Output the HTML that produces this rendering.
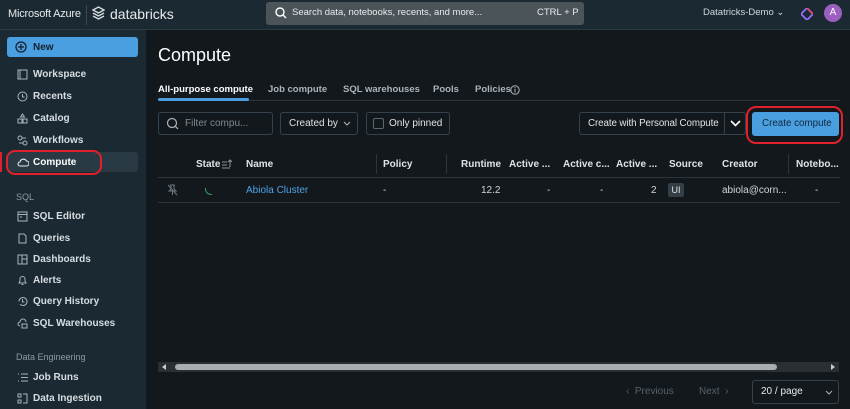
<!DOCTYPE html>
<html><head><meta charset="utf-8"><style>
*{margin:0;padding:0;box-sizing:border-box}
body{width:850px;height:409px;overflow:hidden;background:#13181d;font-family:"Liberation Sans",sans-serif;color:#dfe3e6;position:relative;font-size:10px}
.a{position:absolute;white-space:nowrap;line-height:12px}
.hdr{left:0;top:0;width:850px;height:30px;background:#1b2a32;border-bottom:1px solid #2c3a42}
.side{left:0;top:30px;width:146px;height:379px;background:#1b2a32}
.si{left:17px;font-size:10px;color:#d6dde2;font-weight:bold}
.si svg{position:absolute;left:0;top:0}
.si span{position:absolute;left:16px;top:0}
.lbl{color:#8d9aa3;font-size:9px}
.box{border:1px solid #36424b;border-radius:3px;background:#13181d}
.th{top:159px;font-size:10px;font-weight:bold;color:#dfe3e6}
.td{top:185px;font-size:10px;color:#cfd5d9}
.tab{top:84px;font-size:9.5px;color:#aab4bb;font-weight:bold}
</style></head><body>
<div class="a hdr"></div>
<div class="a" style="left:8px;top:8px;font-size:11px;color:#e6eaed;letter-spacing:-0.2px">Microsoft Azure</div>
<div class="a" style="left:86px;top:5px;width:1px;height:20px;background:#3a4850"></div>
<svg class="a" style="left:92px;top:6px" width="13" height="14" viewBox="0 0 13 14"><path d="M1 4l5.5-3 5.5 3-5.5 3zM1 7l5.5 3 5.5-3M1 10l5.5 3 5.5-3" fill="none" stroke="#d9dee2" stroke-width="1.3"/></svg>
<div class="a" style="left:110px;top:6px;font-size:14px;line-height:16px;color:#e6eaed">databricks</div>
<div class="a" style="left:266px;top:2px;width:318px;height:23px;background:#4b5459;border-radius:3px"></div>
<svg class="a" style="left:275px;top:7px" width="12" height="12"><circle cx="5" cy="5" r="4" fill="none" stroke="#fff" stroke-width="1.4"/><path d="M8 8l3 3" stroke="#fff" stroke-width="1.4"/></svg>
<div class="a" style="left:292px;top:7px;font-size:9.5px;color:#e8ecee">Search data, notebooks, recents, and more...</div>
<div class="a" style="left:537px;top:7px;font-size:9.5px;color:#e8ecee">CTRL + P</div>
<div class="a" style="left:703px;top:7px;font-size:9.5px;color:#d0d7dc">Datatricks-Demo ⌄</div>
<svg class="a" style="left:801px;top:8px" width="12" height="12"><path d="M6 0L12 6 6 12 0 6z" fill="none" stroke="#9a6bff" stroke-width="1.8"/><path d="M6 0L12 6" stroke="#e04a6a" stroke-width="1.8"/></svg>
<div class="a" style="left:824px;top:4px;width:18px;height:18px;border-radius:50%;background:#9b5fc0;color:#fff;font-size:10px;text-align:center;line-height:18px">A</div>

<div class="a side"></div>
<div class="a" style="left:7px;top:37px;width:131px;height:20px;background:#4a9fe0;border-radius:3px"></div>
<svg class="a" style="left:15px;top:41px" width="12" height="12"><circle cx="6" cy="6" r="5" fill="none" stroke="#13202a" stroke-width="1.3"/><path d="M6 3v6M3 6h6" stroke="#13202a" stroke-width="1.3"/></svg>
<div class="a" style="left:33px;top:42px;font-size:10px;color:#13202a;font-weight:bold">New</div>
<div class="a" style="left:7px;top:152px;width:131px;height:20px;background:#2a3a44;border-radius:3px"></div>
<div class="a" style="left:6px;top:150px;width:96px;height:25px;border:2px solid #e0202a;border-radius:9px"></div>
<div class="a" style="left:0;top:152px;width:2px;height:20px;background:#e0202a"></div>

<div class="a si" style="top:69px"><svg width="11" height="11"><rect x="1" y="1" width="9" height="9" fill="none" stroke="#aab4bb"/><path d="M3 1v9" stroke="#aab4bb"/></svg><span>Workspace</span></div>
<div class="a si" style="top:91px"><svg width="11" height="11"><circle cx="5.5" cy="5.5" r="4.5" fill="none" stroke="#aab4bb"/><path d="M5.5 3v3h2" fill="none" stroke="#aab4bb"/></svg><span>Recents</span></div>
<div class="a si" style="top:113px"><svg width="11" height="11"><path d="M5.5 1l2 3h-4zM1 6h4v4H1zM6 6h4v4H6z" fill="none" stroke="#aab4bb"/></svg><span>Catalog</span></div>
<div class="a si" style="top:135px"><svg width="11" height="11"><circle cx="3" cy="3" r="2" fill="none" stroke="#aab4bb"/><circle cx="8" cy="8" r="2" fill="none" stroke="#aab4bb"/><path d="M5 3h4M2 8h4" stroke="#aab4bb"/></svg><span>Workflows</span></div>
<div class="a si" style="top:157px"><svg width="12" height="11"><path d="M3 9h6.5a2.5 2.5 0 0 0 0-5A3.5 3.5 0 0 0 3 5a2 2 0 0 0 0 4z" fill="none" stroke="#e6eaed" stroke-width="1.1"/></svg><span style="color:#fff">Compute</span></div>
<div class="a lbl" style="left:16px;top:191px">SQL</div>
<div class="a si" style="top:211px"><svg width="11" height="11"><rect x="1" y="1" width="9" height="9" fill="none" stroke="#aab4bb"/><path d="M1 3.5h9M3 6h2" stroke="#aab4bb"/></svg><span>SQL Editor</span></div>
<div class="a si" style="top:233px"><svg width="11" height="11"><path d="M2 1h5l2 2v7H2z" fill="none" stroke="#aab4bb"/></svg><span>Queries</span></div>
<div class="a si" style="top:254px"><svg width="11" height="11"><rect x="1" y="1" width="9" height="9" fill="none" stroke="#aab4bb"/><path d="M5 1v9M5 5h5" stroke="#aab4bb"/></svg><span>Dashboards</span></div>
<div class="a si" style="top:275px"><svg width="11" height="11"><path d="M2 8h7L8 6V4a2.5 2.5 0 0 0-5 0v2zM4.5 9.5h2" fill="none" stroke="#aab4bb"/></svg><span>Alerts</span></div>
<div class="a si" style="top:296px"><svg width="11" height="11"><path d="M2 5.5a4 4 0 1 1 1 2.7" fill="none" stroke="#aab4bb"/><path d="M5.5 3v3h2" fill="none" stroke="#aab4bb"/></svg><span>Query History</span></div>
<div class="a si" style="top:318px"><svg width="11" height="11"><path d="M3 8a2 2 0 0 1 0-4 3 3 0 0 1 6 0" fill="none" stroke="#aab4bb"/><rect x="5" y="6" width="5" height="4" fill="none" stroke="#aab4bb"/></svg><span>SQL Warehouses</span></div>
<div class="a lbl" style="left:16px;top:351px">Data Engineering</div>
<div class="a si" style="top:372px"><svg width="11" height="11"><path d="M4 2h7M4 5.5h7M4 9h7M1 2h1M1 9h1" stroke="#aab4bb"/></svg><span>Job Runs</span></div>
<div class="a si" style="top:393px"><svg width="11" height="11"><rect x="1" y="1" width="3" height="3" fill="none" stroke="#aab4bb"/><rect x="1" y="7" width="3" height="3" fill="none" stroke="#aab4bb"/><path d="M6 1h4v9H6" fill="none" stroke="#aab4bb"/></svg><span>Data Ingestion</span></div>

<div class="a" style="left:158px;top:45px;font-size:18px;line-height:20px;color:#fff">Compute</div>
<div class="a tab" style="left:158px;color:#fff">All-purpose compute</div>
<div class="a tab" style="left:268px">Job compute</div>
<div class="a tab" style="left:343px">SQL warehouses</div>
<div class="a tab" style="left:433px">Pools</div>
<div class="a tab" style="left:475px">Policies</div>
<svg class="a" style="left:510px;top:85px" width="10" height="10"><circle cx="5" cy="5" r="4.2" fill="none" stroke="#aab4bb"/><path d="M5 4v3.5" stroke="#aab4bb"/><circle cx="5" cy="2.7" r=".6" fill="#aab4bb"/></svg>
<div class="a" style="left:158px;top:100px;width:682px;height:1px;background:#2c353c"></div>
<div class="a" style="left:158px;top:98px;width:91px;height:3px;background:#4a9fe0;border-radius:2px"></div>

<div class="a box" style="left:158px;top:112px;width:115px;height:23px"></div>
<svg class="a" style="left:166px;top:117px" width="13" height="13"><circle cx="6" cy="6" r="4.5" fill="none" stroke="#aab4bb" stroke-width="1.2"/><path d="M9 9l3 3" stroke="#aab4bb" stroke-width="1.2"/></svg>
<div class="a" style="left:185px;top:118px;color:#7d8990">Filter compu...</div>
<div class="a box" style="left:280px;top:112px;width:78px;height:23px"></div>
<div class="a" style="left:289px;top:118px;color:#dfe3e6">Created by</div>
<svg class="a" style="left:343px;top:121px" width="8" height="6"><path d="M1 1l3 3 3-3" fill="none" stroke="#aab4bb"/></svg>
<div class="a box" style="left:366px;top:112px;width:84px;height:23px"></div>
<div class="a" style="left:373px;top:118px;width:11px;height:11px;border:1px solid #5c6870;border-radius:2px"></div>
<div class="a" style="left:389px;top:118px;color:#dfe3e6">Only pinned</div>
<div class="a box" style="left:579px;top:112px;width:167px;height:23px"></div>
<div class="a" style="left:724px;top:112px;width:1px;height:23px;background:#36424b"></div>
<div class="a" style="left:588px;top:118px;color:#dfe3e6;font-size:9.8px;letter-spacing:-0.1px">Create with Personal Compute</div>
<svg class="a" style="left:730px;top:119px" width="11" height="9"><path d="M1 2l4.5 4.5L10 2" fill="none" stroke="#fff" stroke-width="1.6"/></svg>
<div class="a" style="left:752px;top:112px;width:87px;height:24px;background:#4a9fe0;border-radius:3px"></div>
<div class="a" style="left:762px;top:118px;color:#12263a;font-size:9.8px">Create compute</div>
<div class="a" style="left:746px;top:106px;width:97px;height:38px;border:2px solid #e0202a;border-radius:10px"></div>

<div class="a th" style="left:196px">State</div>
<svg class="a" style="left:222px;top:159px" width="10" height="10"><path d="M0 3h5M0 6h5M0 9h8M8 8V1M6 3l2-2 2 2" fill="none" stroke="#8a959c"/></svg>
<div class="a th" style="left:246px">Name</div>
<div class="a" style="left:376px;top:154px;width:1px;height:20px;background:#2c353c"></div>
<div class="a th" style="left:383px">Policy</div>
<div class="a" style="left:446px;top:154px;width:1px;height:20px;background:#2c353c"></div>
<div class="a th" style="left:461px">Runtime</div>
<div class="a th" style="left:509px">Active ...</div>
<div class="a th" style="left:563px">Active c...</div>
<div class="a th" style="left:616px">Active ...</div>
<div class="a th" style="left:669px">Source</div>
<div class="a th" style="left:722px">Creator</div>
<div class="a" style="left:788px;top:154px;width:1px;height:20px;background:#2c353c"></div>
<div class="a th" style="left:796px">Notebo...</div>
<div class="a" style="left:158px;top:177px;width:682px;height:1px;background:#2c353c"></div>
<div class="a" style="left:158px;top:202px;width:682px;height:1px;background:#2c353c"></div>
<svg class="a" style="left:167px;top:184px" width="11" height="12"><path d="M3 1h5M4 1v4L2 7h7L7 5V1M5.5 7v4M1 1l9 10" fill="none" stroke="#6c777e"/></svg>
<div class="a" style="left:205px;top:188px;width:7px;height:7px;border-bottom:1px solid #3a9a5a;border-left:1px solid #3a9a5a;border-radius:0 0 0 6px"></div>
<div class="a td" style="left:246px;color:#4fa3e6">Abiola Cluster</div>
<div class="a td" style="left:383px">-</div>
<div class="a td" style="left:481px">12.2</div>
<div class="a td" style="left:547px">-</div>
<div class="a td" style="left:600px">-</div>
<div class="a td" style="left:651px">2</div>
<div class="a" style="left:668px;top:183px;width:16px;height:14px;background:#333e46;border-radius:2px;color:#dfe3e6;font-size:9px;text-align:center;line-height:14px">UI</div>
<div class="a td" style="left:722px">abiola@corn...</div>
<div class="a td" style="left:815px">-</div>

<div class="a" style="left:158px;top:362px;width:681px;height:10px;background:#2a2f33"></div>
<svg class="a" style="left:161px;top:364px" width="6" height="6"><path d="M5 0v6L1 3z" fill="#c8cdd0"/></svg>
<div class="a" style="left:175px;top:364px;width:602px;height:6px;background:#a9adaf;border-radius:3px"></div>
<svg class="a" style="left:830px;top:364px" width="6" height="6"><path d="M1 0v6l4-3z" fill="#c8cdd0"/></svg>
<div class="a" style="left:626px;top:386px;color:#56626a">‹&nbsp; Previous</div>
<div class="a" style="left:699px;top:386px;color:#56626a">Next &nbsp;›</div>
<div class="a box" style="left:752px;top:380px;width:87px;height:24px"></div>
<div class="a" style="left:761px;top:386px;color:#e6eaed">20 / page</div>
<svg class="a" style="left:825px;top:390px" width="8" height="6"><path d="M1 1l3 3 3-3" fill="none" stroke="#aab4bb"/></svg>
</body></html>
